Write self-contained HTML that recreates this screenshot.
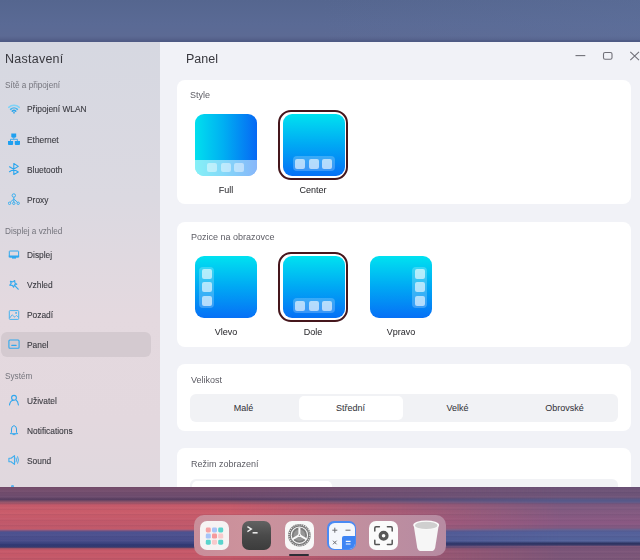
<!DOCTYPE html>
<html><head><meta charset="utf-8">
<style>
*{margin:0;padding:0;box-sizing:border-box}
html,body{width:640px;height:560px;overflow:hidden;font-family:"Liberation Sans",sans-serif}
body{position:relative;background:#5b6b95}
.a{position:absolute}
.t{position:absolute;white-space:nowrap;line-height:normal;will-change:transform}
#wtop{left:0;top:0;width:640px;height:42px;background:linear-gradient(180deg,#55668f 0px,#5a6a95 25px,#5c6a94 36px,#56628c 39px,#4e5a84 41px,#4e5a84 42px)}
#wtop2{left:320px;top:0;width:320px;height:40px;background:linear-gradient(90deg,rgba(96,116,160,0) 0%,rgba(96,116,160,.35) 100%)}
#wbot{left:0;top:487px;width:640px;height:73px;overflow:hidden;z-index:5;background:#8a5570}
#win{left:0;top:42px;width:640px;height:445px;background:#f1f2f7}
#side{left:0;top:42px;width:160px;height:445px;background:linear-gradient(180deg,#d6d8e1 0%,#dbd9e1 35%,#e4d9df 62%,#e3d8de 85%,#e0d8de 100%)}
.h1{font-size:12.5px;color:#38383e}
.sec{font-size:8.2px;color:#74747c}
.item{font-size:8.4px;color:#3a3a40;-webkit-text-stroke:0.1px #3a3a40}
.card{position:absolute;left:177px;width:454px;background:#fff;border-radius:8px}
.lbl{font-size:9px;color:#5c5c64}
.cap{font-size:9px;color:#2c2c30;-webkit-text-stroke:0.04px #2c2c30;text-align:center;width:80px}
.ic{position:absolute;width:62px;height:62px;border-radius:9px;overflow:hidden}
.gv{background:linear-gradient(180deg,#00e2f0 0%,#00a8f4 50%,#0670f6 100%)}
.gh{background:linear-gradient(90deg,#00e0ee 0%,#00b0f2 45%,#0668f4 100%)}
.sel{position:absolute;width:70px;height:70px;border:2px solid #45161c;border-radius:13px}
.pill{position:absolute;background:rgba(255,255,255,.22);border-radius:4px}
.sq{position:absolute;width:10px;height:10px;border-radius:2px;background:rgba(255,255,255,.62)}
.si{position:absolute;left:8px;width:12px;height:12px}
.seg{position:absolute;left:190px;width:428px;height:28px;background:#f1f2f5;border-radius:6px}
.segl{position:absolute;font-size:9px;color:#36363c;-webkit-text-stroke:0.05px #36363c;text-align:center;width:107px;white-space:nowrap}
.dk{position:absolute;top:521px;width:29px;height:29px;border-radius:7px}
</style></head><body>
<div id="wtop" class="a"></div>
<div id="wtop2" class="a"></div>
<div id="win" class="a"></div>
<div id="side" class="a"></div>

<!-- sidebar text -->
<div class="t h1" style="left:5px;top:52.2px;letter-spacing:0.25px">Nastavení</div>
<div class="t sec" style="left:5px;top:81.0px">Sítě a připojení</div>
<div class="t item" style="left:27px;top:104.4px">Připojení WLAN</div>
<div class="t item" style="left:27px;top:134.6px">Ethernet</div>
<div class="t item" style="left:27px;top:164.6px">Bluetooth</div>
<div class="t item" style="left:27px;top:194.6px">Proxy</div>
<div class="t sec" style="left:5px;top:227.0px">Displej a vzhled</div>
<div class="t item" style="left:27px;top:249.7px">Displej</div>
<div class="t item" style="left:27px;top:279.7px">Vzhled</div>
<div class="t item" style="left:27px;top:309.7px">Pozadí</div>
<div class="a" style="left:1px;top:331.5px;width:150px;height:25.5px;border-radius:6px;background:#d4cad0"></div>
<div class="t item" style="left:27px;top:339.5px">Panel</div>
<div class="t sec" style="left:5px;top:372.3px">Systém</div>
<div class="t item" style="left:27px;top:395.5px">Uživatel</div>
<div class="t item" style="left:27px;top:425.5px">Notifications</div>
<div class="t item" style="left:27px;top:455.5px">Sound</div>

<!-- sidebar icons -->
<svg class="si" style="top:103.4px" viewBox="0 0 24 24">
  <path d="M1.5 8.6 A15.5 15.5 0 0 1 22.5 8.6" fill="none" stroke="#7fd3f7" stroke-width="3.2" stroke-linecap="round"/>
  <path d="M5.2 12.6 A10 10 0 0 1 18.8 12.6" fill="none" stroke="#45b6ef" stroke-width="3.2" stroke-linecap="round"/>
  <path d="M8.6 16.4 A5 5 0 0 1 15.4 16.4" fill="none" stroke="#30a6ea" stroke-width="3.2" stroke-linecap="round"/>
  <path d="M12 22 L9.8 19.2 A3 3 0 0 1 14.2 19.2 Z" fill="#30a6ea"/>
</svg>
<svg class="si" style="top:133.1px" viewBox="0 0 24 24">
  <path d="M6.6 0.8 H16.4 V6.6 Q16.4 9.4 13.6 9.4 H9.4 Q6.6 9.4 6.6 6.6Z" fill="#1ea0f0"/>
  <path d="M-0.2 16 H10.2 V22 Q10.2 24 8.2 24 H1.8 Q-0.2 24 -0.2 22Z" fill="#1ea0f0"/>
  <path d="M13.6 16 H24 V22 Q24 24 22 24 H15.6 Q13.6 24 13.6 22Z" fill="#1ea0f0"/>
  <path d="M11.5 9.4 V12.6 M5 16 V12.6 H18.8 V16" fill="none" stroke="#1ea0f0" stroke-width="1.6"/>
</svg>
<svg class="si" style="top:163px" viewBox="0 0 24 24">
  <path d="M3 7.6 L20.6 17.8 L11.6 23 L11.6 1 L20.6 6.8 L3 17.4" fill="none" stroke="#2aa6ee" stroke-width="2.2" stroke-linejoin="round" stroke-linecap="round"/>
</svg>
<svg class="si" style="top:193px" viewBox="0 0 24 24">
  <circle cx="11.6" cy="5" r="3.4" fill="none" stroke="#3aaeee" stroke-width="2"/>
  <circle cx="3" cy="20.6" r="2.4" fill="none" stroke="#3aaeee" stroke-width="2"/>
  <circle cx="11.6" cy="20.6" r="2.4" fill="none" stroke="#3aaeee" stroke-width="2"/>
  <circle cx="20.4" cy="20.6" r="2.4" fill="none" stroke="#3aaeee" stroke-width="2"/>
  <path d="M11.6 8.4 V18.2 M11.6 12 L4.4 18.6 M11.6 12 L19 18.6" fill="none" stroke="#3aaeee" stroke-width="2"/>
</svg>
<svg class="si" style="top:248.5px" viewBox="0 0 24 24">
  <rect x="2.6" y="4" width="18.6" height="12" rx="1" fill="none" stroke="#30a8ee" stroke-width="2"/>
  <rect x="1.6" y="13" width="20.6" height="3.8" fill="#30a8ee"/>
  <rect x="8" y="16" width="8" height="3.2" fill="#30a8ee"/>
</svg>
<svg class="si" style="top:278.7px" viewBox="0 0 24 24">
  <path d="M4.8 4.6 L9.6 5.8 L13.4 3 L13.8 8 L17.6 10.6 L13 11.8 L11.2 16.6 L8.6 12.8 L3.6 12.4 L6.4 8.6 Z" fill="none" stroke="#34aaee" stroke-width="2.2" stroke-linejoin="round"/>
  <path d="M12.6 12.4 L20.4 20.4" stroke="#34aaee" stroke-width="2.4" stroke-linecap="round"/>
</svg>
<svg class="si" style="top:308.6px" viewBox="0 0 24 24">
  <rect x="2.6" y="3.2" width="18.8" height="17.6" rx="1.6" fill="none" stroke="#48b2ee" stroke-width="2"/>
  <path d="M3.6 18 L7.6 12.2 Q8.6 11 9.6 12.4 L12 15.6 Q13 16.6 14 15.6 L16 13.4 Q17 12.6 18 13.6 L20.6 16.6" fill="none" stroke="#48b2ee" stroke-width="1.8"/>
  <circle cx="16.2" cy="7.8" r="1.9" fill="#48b2ee"/>
</svg>
<svg class="si" style="top:338.4px" viewBox="0 0 24 24">
  <rect x="1.8" y="4" width="20.4" height="16.4" rx="2" fill="none" stroke="#30a8ee" stroke-width="2.2"/>
  <path d="M7.6 14.8 H16.2" stroke="#30a8ee" stroke-width="2.4" stroke-linecap="round"/>
</svg>
<svg class="si" style="top:394px" viewBox="0 0 24 24">
  <circle cx="12" cy="7.6" r="4.8" fill="none" stroke="#2ea6ee" stroke-width="2.2"/>
  <path d="M3 22 Q4 13.6 10.4 12.4 M16.6 12.6 Q19.8 14.4 20.8 22" fill="none" stroke="#2ea6ee" stroke-width="2.2" stroke-linecap="round"/>
</svg>
<svg class="si" style="top:424px" viewBox="0 0 24 24">
  <path d="M12 3.2 Q17 4.4 17 10 V16.6 L19.4 19.4 H4.6 L7 16.6 V10 Q7 4.4 12 3.2Z" fill="none" stroke="#2ea6ee" stroke-width="2" stroke-linejoin="round"/>
  <path d="M10 21.2 H14" stroke="#2ea6ee" stroke-width="1.8" stroke-linecap="round"/>
</svg>
<svg class="si" style="top:454px" viewBox="0 0 24 24">
  <path d="M1.8 8.6 H6.2 L13 3.2 V20.8 L6.2 15.4 H1.8 Z" fill="none" stroke="#40aeee" stroke-width="2.2" stroke-linejoin="round"/>
  <path d="M16.2 8 Q17.8 12 16.2 16 M19.4 5.4 Q22.6 12 19.4 18.6" fill="none" stroke="#40aeee" stroke-width="2" stroke-linecap="round"/>
</svg>
<div class="a" style="left:11.3px;top:485.2px;width:2.6px;height:1.8px;border-radius:1.3px 1.3px 0 0;background:#5ab4ee"></div>

<!-- title + window controls -->
<div class="t h1" style="left:186px;top:51.8px">Panel</div>
<svg class="a" style="left:570px;top:46px" width="70" height="20" viewBox="0 0 70 20">
  <line x1="5.5" y1="9.6" x2="15.3" y2="9.6" stroke="#707078" stroke-width="1.1"/>
  <rect x="33.5" y="6.5" width="8.5" height="6.8" rx="1.6" fill="none" stroke="#707078" stroke-width="1.1"/>
  <path d="M60.3 5.8 L69 14.2 M69 5.8 L60.3 14.2" stroke="#707078" stroke-width="1.1"/>
</svg>

<!-- card 1 Style -->
<div class="card" style="top:79.5px;height:124.5px"></div>
<div class="t lbl" style="left:190px;top:89.8px">Style</div>
<div class="ic gh" style="left:195px;top:114px;width:61.5px;height:61.5px">
  <div class="a" style="left:0;top:46px;width:62px;height:16px;background:rgba(255,255,255,.52)"></div>
  <div class="sq" style="left:12px;top:49px;height:9px;background:rgba(255,255,255,.45)"></div>
  <div class="sq" style="left:25.5px;top:49px;height:9px;background:rgba(255,255,255,.45)"></div>
  <div class="sq" style="left:39px;top:49px;height:9px;background:rgba(255,255,255,.45)"></div>
</div>
<div class="t cap" style="left:185.5px;top:184.6px">Full</div>
<div class="sel" style="left:278px;top:109.5px"></div>
<div class="ic gv" style="left:282.5px;top:113.5px">
  <div class="pill" style="left:10px;top:42.5px;width:42px;height:15px"></div>
  <div class="sq" style="left:12.5px;top:45px"></div>
  <div class="sq" style="left:26px;top:45px"></div>
  <div class="sq" style="left:39.5px;top:45px"></div>
</div>
<div class="t cap" style="left:273px;top:184.6px">Center</div>

<!-- card 2 Pozice -->
<div class="card" style="top:222px;height:125px"></div>
<div class="t lbl" style="left:190.5px;top:232.1px">Pozice na obrazovce</div>
<div class="ic gv" style="left:195px;top:256px;width:61.5px;height:61.5px">
  <div class="pill" style="left:4px;top:10.5px;width:15px;height:41px"></div>
  <div class="sq" style="left:6.5px;top:12.5px"></div>
  <div class="sq" style="left:6.5px;top:26px"></div>
  <div class="sq" style="left:6.5px;top:39.5px"></div>
</div>
<div class="t cap" style="left:185.5px;top:326.8px">Vlevo</div>
<div class="sel" style="left:278px;top:251.8px"></div>
<div class="ic gv" style="left:282.5px;top:255.8px">
  <div class="pill" style="left:10px;top:42.5px;width:42px;height:15px"></div>
  <div class="sq" style="left:12.5px;top:45px"></div>
  <div class="sq" style="left:26px;top:45px"></div>
  <div class="sq" style="left:39.5px;top:45px"></div>
</div>
<div class="t cap" style="left:273px;top:326.8px">Dole</div>
<div class="ic gv" style="left:370px;top:256px;width:61.5px;height:61.5px">
  <div class="pill" style="left:42px;top:10.5px;width:15px;height:41px"></div>
  <div class="sq" style="left:44.5px;top:12.5px"></div>
  <div class="sq" style="left:44.5px;top:26px"></div>
  <div class="sq" style="left:44.5px;top:39.5px"></div>
</div>
<div class="t cap" style="left:360.5px;top:326.8px">Vpravo</div>

<!-- card 3 Velikost -->
<div class="card" style="top:364px;height:67px"></div>
<div class="t lbl" style="left:190.5px;top:374.8px">Velikost</div>
<div class="seg" style="top:394px">
  <div class="a" style="left:109px;top:2px;width:104px;height:24px;background:#fff;border-radius:5px"></div>
  <div class="segl" style="left:0;top:9.2px">Malé</div>
  <div class="segl" style="left:107px;top:9.2px">Střední</div>
  <div class="segl" style="left:214px;top:9.2px">Velké</div>
  <div class="segl" style="left:321px;top:9.2px">Obrovské</div>
</div>

<!-- card 4 Režim -->
<div class="card" style="top:447.5px;height:60px"></div>
<div class="t lbl" style="left:190.5px;top:458.5px">Režim zobrazení</div>
<div class="seg" style="top:479px">
  <div class="a" style="left:2px;top:1.5px;width:140px;height:24px;background:#fff;border-radius:5px"></div>
</div>

<!-- wallpaper bottom -->
<div id="wbot" class="a">
  <div class="a" style="left:0;top:0;width:640px;height:73px;background:linear-gradient(180deg,#744c6a 0px,#744e6e 5px,#6a4a6c 10px,#583e60 12.5px,#8e5268 15px,#c45a6a 18px,#ca5c6a 26px,#c0586a 36px,#c25a6a 42px,#6a5286 44px,#4c5290 45.5px,#4a4e8c 52px,#3e4682 56px,#2e3670 58px,#30386e 60px,#a05468 61.5px,#c65868 63px,#c45868 73px)"></div>
  <div class="a" style="left:0;top:0;width:640px;height:74px;background:linear-gradient(180deg,#6c5276 0px,#6e5478 10px,#565888 13px,#585888 15px,#7a587e 17px,#805a80 22px,#8a5882 36px,#805a82 41px,#5c5e90 43px,#54609a 45px,#52629a 54px,#2e3462 56.5px,#3a3a68 58px,#7a5478 59.5px,#7c5678 73px);-webkit-mask-image:linear-gradient(90deg,rgba(0,0,0,0) 0px,rgba(0,0,0,0) 230px,rgba(0,0,0,.5) 400px,rgba(0,0,0,1) 560px);mask-image:linear-gradient(90deg,rgba(0,0,0,0) 0px,rgba(0,0,0,0) 230px,rgba(0,0,0,.5) 400px,rgba(0,0,0,1) 560px)"></div>
  <div class="a" style="left:0;top:0;width:640px;height:74px;opacity:.07;background:repeating-linear-gradient(180deg,rgba(40,30,70,.9) 0px,rgba(40,30,70,0) 1.5px,rgba(255,200,220,0) 3px,rgba(255,200,220,.5) 4px,rgba(40,30,70,0) 5.5px)"></div>
</div>
<!-- dock -->
<div class="a" style="left:194px;top:515px;width:252px;height:41px;border-radius:10px;background:linear-gradient(90deg,#c98e9a 0%,#cc929c 20%,#c4909e 55%,#b68ba2 100%);z-index:6"></div>
<div class="a" style="left:0;top:0;width:640px;height:560px;z-index:7">
  <!-- launcher -->
  <div class="dk" style="left:200px;background:#f6f3f3"></div>
  <svg class="a" style="left:200px;top:521px" width="29" height="29" viewBox="0 0 29 29">
    <rect x="5.8" y="6.5" width="5" height="5" rx="1.4" fill="#f5a2a4"/>
    <rect x="12" y="6.5" width="5" height="5" rx="1.4" fill="#a6c4f8"/>
    <rect x="18.2" y="6.5" width="5" height="5" rx="1.4" fill="#5ad4cc"/>
    <rect x="5.8" y="12.6" width="5" height="5" rx="1.4" fill="#a6c4f8"/>
    <rect x="12" y="12.6" width="5" height="5" rx="1.4" fill="#f59a9c"/>
    <rect x="18.2" y="12.6" width="5" height="5" rx="1.4" fill="#f8cacc"/>
    <rect x="5.8" y="18.7" width="5" height="5" rx="1.4" fill="#5ad4cc"/>
    <rect x="12" y="18.7" width="5" height="5" rx="1.4" fill="#f8cacc"/>
    <rect x="18.2" y="18.7" width="5" height="5" rx="1.4" fill="#5ad4cc"/>
  </svg>
  <!-- terminal -->
  <div class="dk" style="left:242.3px;background:linear-gradient(180deg,#626262 0%,#4a4a4a 50%,#3c3c3c 100%)"></div>
  <svg class="a" style="left:242.3px;top:521px" width="29" height="29" viewBox="0 0 29 29">
    <path d="M5.4 5.6 L9.4 8.1 L5.4 10.6" fill="none" stroke="#f2f2f2" stroke-width="1.3"/>
    <path d="M10.6 11.8 H15.6" stroke="#f2f2f2" stroke-width="1.5"/>
  </svg>
  <!-- settings -->
  <div class="dk" style="left:284.8px;background:#f8f8f8"></div>
  <svg class="a" style="left:284.8px;top:521px" width="29" height="29" viewBox="0 0 29 29">
    <circle cx="14.4" cy="14.2" r="10" fill="none" stroke="#7a7a7a" stroke-width="2.6"/>
    <circle cx="14.4" cy="14.2" r="10.4" fill="none" stroke="#f4f4f4" stroke-width="1.3" stroke-dasharray="0.85 1.33"/>
    <circle cx="14.4" cy="14.2" r="7.6" fill="#7c7c7c"/>
    <circle cx="14.4" cy="14.2" r="5.8" fill="#969696"/>
    <path d="M14.4 14.2 V6.4 M14.4 14.2 L7.6 18.1 M14.4 14.2 L21.2 18.1" stroke="#f8f8f8" stroke-width="2"/>
    <circle cx="14.4" cy="14.2" r="1.7" fill="#f8f8f8"/>
    <circle cx="14.4" cy="14.2" r="0.7" fill="#8a8a8a"/>
  </svg>
  <div class="a" style="left:289px;top:553.8px;width:20.3px;height:2px;border-radius:1px;background:#2e2e36"></div>
  <!-- calculator -->
  <div class="dk" style="left:327.1px;background:#4a8af4"></div>
  <div class="a" style="left:328.6px;top:522.5px;width:26px;height:26px;border-radius:5.6px;background:#f5f7fc;overflow:hidden">
    <div class="a" style="left:13.1px;top:13.5px;width:14px;height:14px;border-radius:2px 0 0 0;background:#3d84f4"></div>
  </div>
  <svg class="a" style="left:327.1px;top:521px" width="29" height="29" viewBox="0 0 29 29">
    <path d="M5.3 9.2 H10.3 M7.8 6.7 V11.7" stroke="#6a6a70" stroke-width="1"/>
    <path d="M18.5 9.2 H23.5" stroke="#6a6a70" stroke-width="1"/>
    <path d="M6 19.7 L9.6 23.3 M9.6 19.7 L6 23.3" stroke="#6a6a70" stroke-width="1"/>
    <path d="M18.8 20.4 H23.6 M18.8 23 H23.6" stroke="#f4f8ff" stroke-width="1.1"/>
  </svg>
  <!-- screenshot -->
  <div class="dk" style="left:369.1px;background:#fbfbfb"></div>
  <svg class="a" style="left:369.1px;top:521px" width="29" height="29" viewBox="0 0 29 29">
    <path d="M5.8 10 V7 Q5.8 5.8 7 5.8 H10.4 M18.4 5.8 H22 Q23.2 5.8 23.2 7 V10 M23.2 19.2 V22.4 Q23.2 23.6 22 23.6 H18.4 M10.4 23.6 H7 Q5.8 23.6 5.8 22.4 V19.2" fill="none" stroke="#545454" stroke-width="1.5" stroke-linecap="round"/>
    <circle cx="14.6" cy="14.7" r="3.4" fill="none" stroke="#585858" stroke-width="3.2"/>
  </svg>
  <!-- trash -->
  <svg class="a" style="left:410px;top:518px" width="34" height="36" viewBox="0 0 34 36">
    <path d="M3.6 6.8 L7.2 29.4 Q7.8 33 11.6 33 H20.8 Q24.6 33 25.2 29.4 L28.8 6.8 Z" fill="#f6f6f6"/>
    <ellipse cx="16.2" cy="7" rx="12.9" ry="4.6" fill="#fbfbfb"/>
    <ellipse cx="16.2" cy="7.4" rx="11.3" ry="3.7" fill="#cfcfcf"/>
  </svg>
</div>

</body></html>
